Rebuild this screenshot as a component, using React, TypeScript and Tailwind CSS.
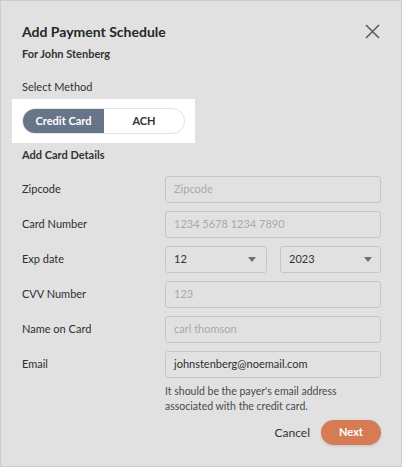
const FONT = { fontFamily: 'Lato, "Noto Sans", sans-serif' }

interface Field {
  label: string
  placeholder?: string
  value?: string
}

const FIELDS_TOP: Field[] = [
  { label: 'Zipcode', placeholder: 'Zipcode' },
  { label: 'Card Number', placeholder: '1234 5678 1234 7890' },
]

const FIELDS_BOTTOM: Field[] = [
  { label: 'CVV Number', placeholder: '123' },
  { label: 'Name on Card', placeholder: 'carl thomson' },
  { label: 'Email', value: 'johnstenberg@noemail.com' },
]

function Caret() {
  return (
    <svg className="w-[8px] h-[5px]" viewBox="0 0 8 5">
      <path d="M0 0h8L4 5z" fill="#707070" />
    </svg>
  )
}

function Row({ field }: { field: Field }) {
  return (
    <div className="flex items-center">
      <span className="w-[143px] text-[11px] text-[#2e2e2e]">{field.label}</span>
      <div className="w-[216px] h-[27px] rounded-[3px] border border-[#c6c6c6] flex items-center px-[8px] text-[11px]">
        {field.value ? (
          <span className="text-[#2e2e2e]">{field.value}</span>
        ) : (
          <span className="text-[#a9a9a9]">{field.placeholder}</span>
        )}
      </div>
    </div>
  )
}

export default function App() {
  return (
    <div style={FONT} className="w-[402px] h-[467px] bg-[#e1e1e1] border border-[#cdcdcd] pl-[21px] pr-[20px] pt-[20px] text-[#2a2a2a]">
      {/* Header */}
      <div className="flex items-center justify-between h-[20px]">
        <h1 className="text-[14px] font-bold text-[#262626]">Add Payment Schedule</h1>
        <svg className="w-[15px] h-[15px] mr-[1px]" viewBox="0 0 15 15" fill="none" stroke="#5a5a5a" strokeWidth="1.5">
          <path d="M1 1l13 13M14 1L1 14" />
        </svg>
      </div>
      <p className="mt-[5px] text-[11px] font-bold leading-[16px] text-[#333]">For John Stenberg</p>

      <p className="mt-[17px] text-[11px] leading-[16px] text-[#333]">Select Method</p>

      {/* Method toggle */}
      <div className="mt-[4px] -ml-[10px] w-[183px] h-[44px] bg-white pl-[10px] pt-[9px]">
        <div className="flex w-[163px] h-[26px] rounded-full border border-[#e3e3e3] overflow-hidden">
          <div className="w-[81px] bg-[#667587] flex items-center justify-center text-white text-[11px] font-bold">
            Credit Card
          </div>
          <div className="flex-1 flex items-center justify-center text-[11px] font-bold text-[#333]">ACH</div>
        </div>
      </div>

      <p className="mt-[4px] text-[11px] font-bold leading-[16px] text-[#333]">Add Card Details</p>

      {/* Form */}
      <div className="mt-[13px] flex flex-col gap-[8px]">
        {FIELDS_TOP.map(f => <Row key={f.label} field={f} />)}
        <div className="flex items-center">
          <span className="w-[143px] text-[11px] text-[#2e2e2e]">Exp date</span>
          <div className="flex gap-[13px]">
            <div className="w-[102px] h-[27px] rounded-[3px] border border-[#c6c6c6] flex items-center justify-between pl-[8px] pr-[10px] text-[11px] text-[#333]">
              12
              <Caret />
            </div>
            <div className="w-[101px] h-[27px] rounded-[3px] border border-[#c6c6c6] flex items-center justify-between pl-[8px] pr-[8px] text-[11px] text-[#333]">
              2023
              <Caret />
            </div>
          </div>
        </div>
        {FIELDS_BOTTOM.map(f => <Row key={f.label} field={f} />)}
      </div>

      <p className="ml-[143px] mt-[6px] text-[10.5px] leading-[15px] text-[#4a4a4a] w-[200px]">
        It should be the payer's email address associated with the credit card.
      </p>

      {/* Actions */}
      <div className="mt-[6px] flex items-center justify-end gap-[11px]">
        <button className="text-[12px] text-[#333]">Cancel</button>
        <button className="w-[60px] h-[25px] rounded-full bg-[#d57c55] text-white text-[11px] font-bold shadow-[0_1px_3px_rgba(0,0,0,0.15)]">
          Next
        </button>
      </div>
    </div>
  )
}
